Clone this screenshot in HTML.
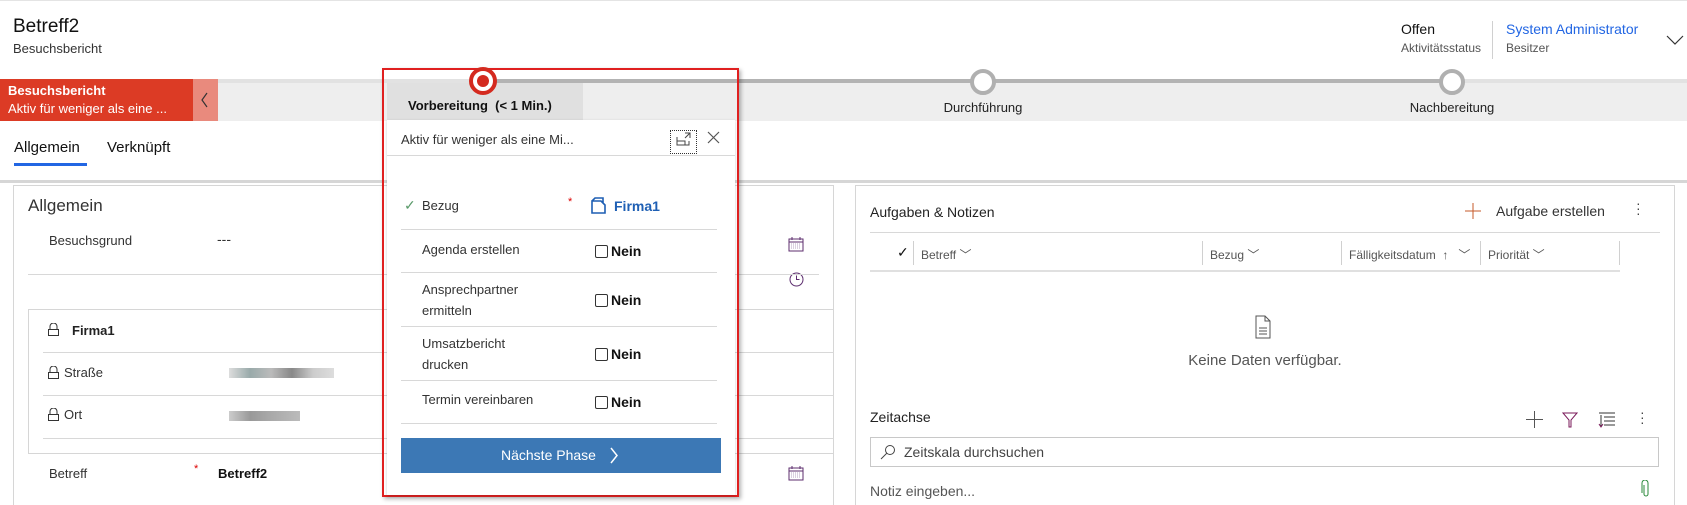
<!DOCTYPE html>
<html><head><meta charset="utf-8"><style>
*{margin:0;padding:0;box-sizing:border-box}
body{width:1687px;height:498px;overflow:hidden;background:#fff;font-family:"Liberation Sans",sans-serif;color:#333;position:relative;font-size:14px}
.a{position:absolute;white-space:nowrap}
.hl{position:absolute;height:1px;background:#d8d8d8}
.vl{position:absolute;width:1px;background:#d0d0d0}
.cb{display:inline-block;width:13px;height:13px;border:1px solid #333;border-radius:2px;vertical-align:-2px;margin-right:3px}
</style></head><body>
<div class="hl" style="left:0;top:0;width:1687px;background:#e4e4e4"></div>
<div class="a" style="left:13px;top:16px;font-size:19px;color:#111">Betreff2</div>
<div class="a" style="left:13px;top:41px;font-size:13px;color:#333">Besuchsbericht</div>
<div class="a" style="left:1401px;top:21px;font-size:14px;color:#111">Offen</div>
<div class="a" style="left:1401px;top:41px;font-size:12px;color:#555">Aktivitätsstatus</div>
<div class="vl" style="left:1492px;top:21px;height:38px"></div>
<div class="a" style="left:1506px;top:21px;font-size:14px;color:#2266e3">System Administrator</div>
<div class="a" style="left:1506px;top:41px;font-size:12px;color:#555">Besitzer</div>
<svg class="a" style="left:1666px;top:35px" width="18" height="10"><path d="M1 1l8 8 8-8" stroke="#333" fill="none" stroke-width="1.2"/></svg>

<!-- stage bar -->
<div class="a" style="left:0;top:79px;width:1687px;height:42px;background:#eeeeee"></div>
<div class="a" style="left:218px;top:79px;width:1469px;height:4px;background:#e2e2e2"></div>
<div class="a" style="left:483px;top:79px;width:969px;height:4px;background:#b3b3b3"></div>
<div class="a" style="left:0;top:79px;width:193px;height:42px;background:#dc3b25;color:#fff;padding:4px 0 0 8px">
<div style="font-size:13px;font-weight:bold">Besuchsbericht</div><div style="font-size:13px;margin-top:3px">Aktiv für weniger als eine ...</div></div>
<div class="a" style="left:193px;top:79px;width:25px;height:42px;background:#e98a7d"></div>
<svg class="a" style="left:200px;top:92px" width="10" height="16"><path d="M7 1L2 8l5 7" stroke="#333" fill="none" stroke-width="1.2"/></svg>
<div class="a" style="left:983px;top:100px;transform:translateX(-50%);font-size:13px;color:#222">Durchführung</div>
<div class="a" style="left:970px;top:69px;width:26px;height:26px;border-radius:50%;border:4px solid #b0b0b0;background:#fff"></div>
<div class="a" style="left:1452px;top:100px;transform:translateX(-50%);font-size:13px;color:#222">Nachbereitung</div>
<div class="a" style="left:1439px;top:69px;width:26px;height:26px;border-radius:50%;border:4px solid #b0b0b0;background:#fff"></div>

<!-- tabs -->
<div class="a" style="left:14px;top:139px;font-size:15px;color:#111">Allgemein</div>
<div class="a" style="left:14px;top:163px;width:73px;height:3px;background:#2266e3"></div>
<div class="a" style="left:107px;top:139px;font-size:15px;color:#111">Verknüpft</div>
<div class="a" style="left:0;top:180px;width:1687px;height:3px;background:#d6d6d6"></div>

<!-- left panel -->
<div class="a" style="left:13px;top:185px;width:821px;height:320px;border:1px solid #d6d6d6;border-bottom:none"></div>
<div class="a" style="left:28px;top:196px;font-size:17px;color:#333">Allgemein</div>
<div class="a" style="left:49px;top:233px;font-size:13px">Besuchsgrund</div>
<div class="a" style="left:217px;top:231px;font-size:14px">---</div>
<svg class="a" style="left:788px;top:237px" width="16" height="15"><rect x="1" y="2" width="14" height="12" fill="none" stroke="#5c2d6e"/><path d="M1 5h14M4 0v3M12 0v3" stroke="#5c2d6e"/><path d="M3 7h10M3 9h10M3 11h10" stroke="#b7a3c0" stroke-dasharray="1 1"/></svg>
<svg class="a" style="left:789px;top:272px" width="15" height="15"><circle cx="7.5" cy="7.5" r="6.5" fill="none" stroke="#5c2d6e"/><path d="M7.5 3.5v4h3" stroke="#5c2d6e" fill="none"/></svg>
<div class="hl" style="left:28px;top:274px;width:791px"></div>
<div class="a" style="left:28px;top:309px;width:806px;height:145px;border:1px solid #d6d6d6;border-right:none"></div>
<div class="hl" style="left:43px;top:352px;width:791px"></div>
<div class="hl" style="left:43px;top:395px;width:791px"></div>
<div class="hl" style="left:43px;top:438px;width:791px"></div>
<svg class="a" style="left:48px;top:323px" width="11" height="13"><path d="M2 6V3.5a3.5 3.5 0 0 1 7 0V6M.5 6.5h10v6H.5z" fill="none" stroke="#333"/></svg>
<div class="a" style="left:72px;top:323px;font-size:13px;font-weight:bold;color:#222">Firma1</div>
<svg class="a" style="left:48px;top:366px" width="11" height="13"><path d="M2 6V3.5a3.5 3.5 0 0 1 7 0V6M.5 6.5h10v6H.5z" fill="none" stroke="#333"/></svg>
<div class="a" style="left:64px;top:365px;font-size:13px">Straße</div>
<div class="a" style="left:229px;top:368px;width:105px;height:10px;background:linear-gradient(90deg,#ddd,#9aa 20%,#bbb 40%,#888 60%,#ccc 80%,#ddd)"></div>
<svg class="a" style="left:48px;top:408px" width="11" height="13"><path d="M2 6V3.5a3.5 3.5 0 0 1 7 0V6M.5 6.5h10v6H.5z" fill="none" stroke="#333"/></svg>
<div class="a" style="left:64px;top:407px;font-size:13px">Ort</div>
<div class="a" style="left:229px;top:411px;width:71px;height:10px;background:linear-gradient(90deg,#ccc,#999 30%,#aaa 60%,#bbb)"></div>
<div class="a" style="left:49px;top:466px;font-size:13px">Betreff</div>
<div class="a" style="left:194px;top:463px;font-size:11px;color:#d00">*</div>
<div class="a" style="left:218px;top:466px;font-size:13px;font-weight:bold;color:#111">Betreff2</div>
<svg class="a" style="left:788px;top:466px" width="16" height="15"><rect x="1" y="2" width="14" height="12" fill="none" stroke="#5c2d6e"/><path d="M1 5h14M4 0v3M12 0v3" stroke="#5c2d6e"/><path d="M3 7h10M3 9h10M3 11h10" stroke="#b7a3c0" stroke-dasharray="1 1"/></svg>

<!-- right panel -->
<div class="a" style="left:855px;top:185px;width:820px;height:320px;border:1px solid #d6d6d6;border-bottom:none"></div>
<div class="a" style="left:870px;top:204px;font-size:14px;color:#222">Aufgaben &amp; Notizen</div>
<svg class="a" style="left:1465px;top:203px" width="16" height="16"><path d="M8 0v16M0 8h16" stroke="#c65a2a" stroke-width="1"/></svg>
<div class="a" style="left:1496px;top:203px;font-size:14px">Aufgabe erstellen</div>
<div class="a" style="left:1636px;top:201px;font-size:14px;line-height:5px;color:#444">·<br>·<br>·</div>
<div class="hl" style="left:870px;top:232px;width:790px"></div>
<div class="a" style="left:897px;top:244px;font-size:14px;color:#111">✓</div>
<div class="vl" style="left:913px;top:241px;height:24px"></div>
<div class="a" style="left:921px;top:246px;font-size:12px;color:#555">Betreff ﹀</div>
<div class="vl" style="left:1202px;top:241px;height:24px"></div>
<div class="a" style="left:1210px;top:246px;font-size:12px;color:#555">Bezug ﹀</div>
<div class="vl" style="left:1341px;top:241px;height:24px"></div>
<div class="a" style="left:1349px;top:246px;font-size:12px;color:#555">Fälligkeitsdatum &nbsp;↑ &nbsp;&nbsp;﹀</div>
<div class="vl" style="left:1480px;top:241px;height:24px"></div>
<div class="a" style="left:1488px;top:246px;font-size:12px;color:#555">Priorität ﹀</div>
<div class="vl" style="left:1619px;top:241px;height:24px"></div>
<div class="a" style="left:870px;top:270px;width:750px;height:2px;background:#e0e0e0"></div>
<svg class="a" style="left:1255px;top:315px" width="16" height="24"><path d="M1 1h9l5 5v17H1z M10 1v5h5" fill="none" stroke="#555"/><path d="M4 13h8M4 16h8M4 19h8" stroke="#555"/></svg>
<div class="a" style="left:1265px;top:352px;transform:translateX(-50%);font-size:15px;color:#555">Keine Daten verfügbar.</div>
<div class="a" style="left:870px;top:409px;font-size:14px;color:#222">Zeitachse</div>
<svg class="a" style="left:1526px;top:411px" width="17" height="17"><path d="M8.5 0v17M0 8.5h17" stroke="#555"/></svg>
<svg class="a" style="left:1562px;top:412px" width="16" height="16"><path d="M1 1h14L9 8v7H7V8z" fill="none" stroke="#7a1a5a"/></svg>
<svg class="a" style="left:1598px;top:412px" width="18" height="16"><path d="M1 1h16M6 5h11M6 9h11M6 13h11M3 3v12" stroke="#333"/><path d="M1 12l2 3 2-3" stroke="#7a1a5a" fill="none"/></svg>
<div class="a" style="left:1640px;top:410px;font-size:14px;line-height:5px;color:#444">·<br>·<br>·</div>
<div class="a" style="left:870px;top:437px;width:789px;height:30px;border:1px solid #c8c8c8"></div>
<svg class="a" style="left:880px;top:444px" width="16" height="16"><circle cx="10" cy="6" r="4.5" fill="none" stroke="#444"/><path d="M7 9l-6 6" stroke="#444"/></svg>
<div class="a" style="left:904px;top:444px;font-size:14px;color:#444">Zeitskala durchsuchen</div>
<div class="a" style="left:870px;top:483px;font-size:14px;color:#555">Notiz eingeben...</div>
<svg class="a" style="left:1641px;top:480px" width="10" height="18"><path d="M3 5v9a2 2 0 0 0 4 0V3a3 3 0 0 0-6 0v10" fill="none" stroke="#2a8a3a"/></svg>

<!-- popup -->
<div class="a" style="left:382px;top:68px;width:357px;height:429px;border:2px solid #e02020;box-shadow:2px 2px 4px rgba(0,0,0,.3)"></div>
<div class="a" style="left:387px;top:83px;width:196px;height:37px;background:#e0e0e0"></div>
<div class="a" style="left:408px;top:98px;font-size:13px;font-weight:bold;color:#111">Vorbereitung&nbsp; (&lt; 1 Min.)</div>
<div class="a" style="left:469px;top:67px;width:28px;height:28px;border-radius:50%;background:#fff;border:4px solid #d42a1f"></div>
<div class="a" style="left:477px;top:75px;width:12px;height:12px;border-radius:50%;background:#d42a1f"></div>
<div class="a" style="left:387px;top:120px;width:348px;height:375px;background:#fff;box-shadow:0 1px 3px rgba(0,0,0,.2)"></div>
<div class="a" style="left:401px;top:132px;font-size:13px;color:#333">Aktiv für weniger als eine Mi...</div>
<div class="a" style="left:670px;top:130px;width:27px;height:24px;border:1px dotted #333"></div>
<svg class="a" style="left:676px;top:132px" width="16" height="14"><path d="M1 5v8h12V9M1 9h8v4M9 1h5v5M14 1L9 6" fill="none" stroke="#444"/></svg>
<svg class="a" style="left:707px;top:131px" width="13" height="13"><path d="M1 1l11 11M12 1L1 12" stroke="#555" stroke-width="1.2"/></svg>
<div class="hl" style="left:387px;top:155px;width:348px"></div>
<div class="a" style="left:404px;top:197px;font-size:14px;color:#5a9a6a">✓</div>
<div class="a" style="left:422px;top:198px;font-size:13px">Bezug</div>
<div class="a" style="left:568px;top:196px;font-size:11px;color:#d00">*</div>
<svg class="a" style="left:591px;top:197px" width="15" height="17"><path d="M1 4h9l4 4v8H1zM1 4l3-3h8v5" fill="none" stroke="#1e5fb4" stroke-width="1.6"/></svg>
<div class="a" style="left:614px;top:198px;font-size:14px;font-weight:bold;color:#1e5fb4">Firma1</div>
<div class="hl" style="left:401px;top:229px;width:316px"></div>
<div class="a" style="left:422px;top:242px;font-size:13px">Agenda erstellen</div>
<div class="a" style="left:595px;top:243px;font-size:14px;font-weight:bold;color:#111"><span class="cb"></span>Nein</div>
<div class="hl" style="left:401px;top:272px;width:316px"></div>
<div class="a" style="left:422px;top:279px;font-size:13px;line-height:21px">Ansprechpartner<br>ermitteln</div>
<div class="a" style="left:595px;top:292px;font-size:14px;font-weight:bold;color:#111"><span class="cb"></span>Nein</div>
<div class="hl" style="left:401px;top:326px;width:316px"></div>
<div class="a" style="left:422px;top:333px;font-size:13px;line-height:21px">Umsatzbericht<br>drucken</div>
<div class="a" style="left:595px;top:346px;font-size:14px;font-weight:bold;color:#111"><span class="cb"></span>Nein</div>
<div class="hl" style="left:401px;top:380px;width:316px"></div>
<div class="a" style="left:422px;top:392px;font-size:13px">Termin vereinbaren</div>
<div class="a" style="left:595px;top:394px;font-size:14px;font-weight:bold;color:#111"><span class="cb"></span>Nein</div>
<div class="hl" style="left:401px;top:423px;width:316px"></div>
<div class="a" style="left:401px;top:438px;width:320px;height:35px;background:#3c78b5"></div>
<div class="a" style="left:501px;top:447px;font-size:14px;color:#fff">Nächste Phase</div>
<svg class="a" style="left:609px;top:447px" width="10" height="17"><path d="M2 1l6 7.5L2 16" stroke="#fff" fill="none" stroke-width="1.5"/></svg>
</body></html>
